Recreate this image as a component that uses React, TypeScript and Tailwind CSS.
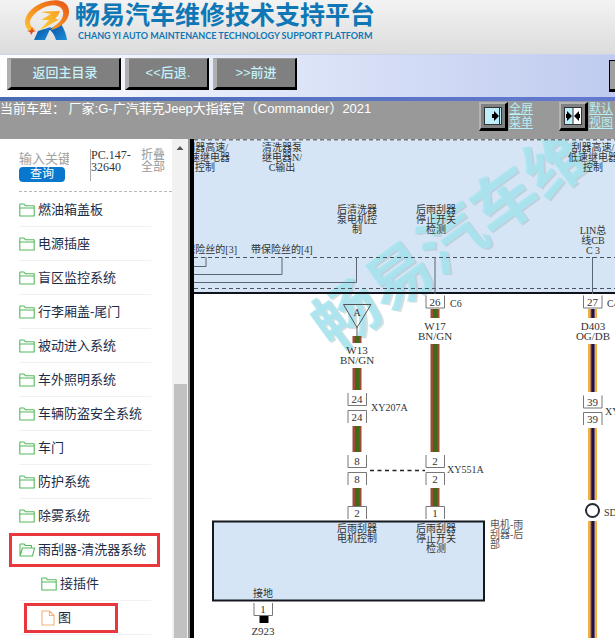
import type { ReactNode } from "react";

const folders = ["燃油箱盖板", "电源插座", "盲区监控系统", "行李厢盖-尾门", "被动进入系统", "车外照明系统", "车辆防盗安全系统", "车门", "防护系统", "除雾系统"];

function Logo() {
    return (<svg viewBox="0 0 48 42" className="h-[42px] w-12 shrink-0" aria-hidden="true">
      <defs>
        <linearGradient id="ring" x1="1" y1="0" x2="0" y2="1">
          <stop offset="0" stopColor="#e8521a" />
          <stop offset="0.5" stopColor="#f58a1c" />
          <stop offset="1" stopColor="#fdc63a" />
        </linearGradient>
        <linearGradient id="bolt" x1="1" y1="0" x2="0" y2="1">
          <stop offset="0" stopColor="#f9a01f" />
          <stop offset="1" stopColor="#fdd03c" />
        </linearGradient>
        <linearGradient id="leg" x1="0" y1="0" x2="1" y2="1">
          <stop offset="0" stopColor="#0b4fa5" />
          <stop offset="1" stopColor="#1b8fd8" />
        </linearGradient>
      </defs>
      <path d="M14 31 L27 27 L21 40 L10 40 Z" fill="url(#leg)" />
      <path d="M25 29 L37 24 Q42 32 43 40 L32 40 Q30 33 25 29 Z" fill="url(#leg)" />
      <path d="M9 32 C-3 29 -1 14 12 6 C23 -1 38 -2 43 5 C49 15 41 27 27 30 L30 26 C38 22 42 13 37 8 C32 3 22 5 14 11 C5 18 3 25 11 29 Z" fill="url(#ring)" />
      <path d="M17 12 Q29 11 36 11 Q35 15 31 19 Q36 19 34 20 L15 31 L25 20 L17 20 L27 14 Z" fill="url(#bolt)" />
      <path d="M8 27 L9 30 L12 31 L9 32 L7 35 L6 32 L3 31 L7 30 Z" fill="#e2501c" />
    </svg>);
}

function FolderIcon({ open = false }: { open?: boolean }) {
    return (<svg viewBox="0 0 16 14" className="h-3.5 w-4 shrink-0" fill="none" stroke="#55b95c" strokeWidth="1.1" strokeLinejoin="round" aria-hidden="true">
      {open ? <path d="M1 13V1.5Q1 1 1.5 1H5L6.5 2.5H12.5V5M1 13L3.5 5H15.5L13.5 13H1Z" /> : <path d="M.8 13V1.5Q.8 1 1.3 1H5L6.5 2.8H15.2V13H.8ZM.8 5H15.2" />}
    </svg>);
}

function PageIcon() {
    return (<svg viewBox="0 0 14 16" className="h-4 w-3.5 shrink-0" fill="none" stroke="#f0b27a" strokeWidth="1.1" strokeLinejoin="round" aria-hidden="true">
      <path d="M1 1H8.5L13 5.5V15H1ZM8.5 1V5.5H13" />
    </svg>);
}

function ToolButton({ children, className }: { children: ReactNode; className: string }) {
    return (<button type="button" className={"h-8 shrink-0 border-t border-r-2 border-b-3 border-l-4 border-t-[#999] border-r-black border-b-black border-l-[#b0b0b0] bg-[#808080] text-[13px] font-medium text-[#c4f1fa] " + className}>
      {children}
    </button>);
}

function ViewLink({ first, second, children }: { first: string; second: string; children: ReactNode }) {
    return (<div className="flex w-[54px] shrink-0">
      <button type="button" aria-label={first + second} className="flex h-[29px] w-[29px] shrink-0 items-center justify-center border-t-2 border-r-3 border-b-3 border-l-2 border-t-[#b4b4b4] border-r-black border-b-black border-l-[#b4b4b4] bg-[#808080]">
        <svg viewBox="0 0 18 18" className="h-[18px] w-[18px]" aria-hidden="true">{children}</svg>
      </button>
      <a href="#" className="ml-px text-xs leading-[14px] whitespace-nowrap text-[#b5eef5] underline">
        {first}<br />{second}
      </a>
    </div>);
}

function TreeRow({ label, icon, className = "", lined = true, frame }: { label: string; icon: ReactNode; className?: string; lined?: boolean; frame?: string }) {
    return (<li className={"relative mr-[21px] flex h-[34px] items-center border-b " + (lined ? "border-[#f1f1f3]" : "border-transparent")}>
      <a href="#" className={"flex items-center gap-[3px] text-[13px] leading-5 whitespace-nowrap text-[#1c2c48] " + className}>
        {icon}
        {label}
      </a>
      {frame && <span className={"pointer-events-none absolute border-3 border-[#e8383d] " + frame} />}
    </li>);
}

function Label({ x, y, lines, size = 10, anchor = "middle", color = "#333" }: { x: number; y: number; lines: string[]; size?: number; anchor?: "middle" | "start" | "end"; color?: string }) {
    return (<text textAnchor={anchor} fontSize={size} fill={color}>
      {lines.map((line, i) => <tspan key={i} x={x} y={y + i * 10}>{line}</tspan>)}
    </text>);
}

// connector pin: the side that faces the wire stays open
function Pin({ x, y, n, open }: { x: number; y: number; n: string; open: "top" | "bottom" }) {
    const d = open === "top" ? `M${x - 9} ${y}v12.5h18.5v-12.5` : `M${x - 9} ${y + 12.5}v-12.5h18.5v12.5`;
    return (<g>
      <path d={d} fill="none" stroke="#777" />
      <text x={x} y={y + 10} textAnchor="middle" fontSize={11} fill="#333">{n}</text>
    </g>);
}

function Wire({ x, from, to, orange = false }: { x: number; from: number; to: number; orange?: boolean }) {
    const h = to - from;
    return (<g>
      <rect x={x - 4.5} y={from} width={9} height={h} fill={orange ? "#f0b23c" : "#a04a38"} />
      <rect x={x - 2} y={from} width={4.5} height={h} fill={orange ? "#77577a" : "#3d6b16"} />
      {orange && <rect x={x - 1} y={from} width={2.5} height={h} fill="#1d1440" />}
    </g>);
}

function WiringDiagram() {
    return (<svg viewBox="194 139 421 499" className="block w-full" fontFamily='"Liberation Serif", "Noto Sans CJK SC", serif' role="img" aria-label="图">
      <rect x="194" y="139" width="421" height="154" fill="#d5e5f5" />
      <rect x="213" y="521.5" width="271" height="79" fill="#d5e5f5" stroke="#15191f" strokeWidth="2" />
      <g transform="translate(334 353) rotate(-36)" fontSize="65" fontWeight="700" fontFamily='"Noto Sans CJK SC", sans-serif'>
        <text x="1" y="2" fill="#9fb0b5" opacity="0.4">畅易汽车维</text>
        <text fill="#a6e6f0" opacity="0.85">畅易汽车维</text>
      </g>
      <path d="M194 139.5H615" stroke="#777" strokeWidth="2" strokeDasharray="4 3" />
      <path d="M194 257.5H615M194 288.5H615" stroke="#4a5460" strokeDasharray="4 3" />
      <path d="M194 293H615" stroke="#10141a" strokeWidth="2" />
      <path d="M194 266.5H206V257M194 274.5H282V257M194 282.5H356.5V257M435 257V294M592.5 257V294" fill="none" stroke="#5b6672" />

      <Label x={228} y={151} anchor="end" lines={["刮器高速/"]} />
      <Label x={230} y={161} anchor="end" lines={["低速继电器"]} />
      <Label x={215} y={171} anchor="end" lines={["控制"]} />
      <Label x={282} y={151} lines={["清洗器泵", "继电器N/", "C输出"]} />
      <Label x={357} y={213} lines={["后清洗器", "泵电机控", "制"]} />
      <Label x={436} y={213} lines={["后雨刮器", "停止开关", "检测"]} />
      <Label x={237} y={253} anchor="end" lines={["带保险丝的[3]"]} />
      <Label x={251} y={253} anchor="start" lines={["带保险丝的[4]"]} />
      <Label x={593} y={151} lines={["刮器高速/", "低速继电器", "控制"]} />
      <Label x={593} y={234} lines={["LIN总", "线CB", "C 3"]} />

      <path d="M343.5 304.5H371L357 327.5ZM357 327V337" fill="none" stroke="#555" />
      <Label x={357} y={316} lines={["A"]} />
      <Wire x={357} from={336} to={343} />
      <Label x={357} y={354} size={11} lines={["W13", "BN/GN"]} />
      <Wire x={357} from={368} to={390} />
      <Pin x={357} y={393} n="24" open="top" />
      <Pin x={357} y={410.5} n="24" open="bottom" />
      <Label x={371} y={411} anchor="start" lines={["XY207A"]} />
      <Wire x={357} from={426} to={452} />
      <Pin x={357} y={455} n="8" open="top" />
      <Pin x={357} y={472.5} n="8" open="bottom" />
      <Wire x={357} from={488} to={506} />
      <Pin x={357} y={506.5} n="2" open="bottom" />
      <path d="M370 470.5H425" stroke="#222" strokeWidth="1.5" strokeDasharray="4 3.5" />

      <Pin x={435} y={295.5} n="26" open="top" />
      <Label x={450} y={307} anchor="start" lines={["C6"]} />
      <Wire x={435} from={309} to={318} />
      <Label x={435} y={330} size={11} lines={["W17", "BN/GN"]} />
      <Wire x={435} from={344} to={452} />
      <Pin x={435} y={455} n="2" open="top" />
      <Pin x={435} y={472.5} n="2" open="bottom" />
      <Label x={447} y={473} anchor="start" lines={["XY551A"]} />
      <Wire x={435} from={488} to={506} />
      <Pin x={435} y={506.5} n="1" open="bottom" />

      <Pin x={592.5} y={295.5} n="27" open="top" />
      <Label x={607} y={307} anchor="start" lines={["C4"]} />
      <Wire x={592.5} from={309} to={318} orange />
      <Label x={593} y={330} size={11} lines={["D403", "OG/DB"]} />
      <Wire x={592.5} from={344} to={392} orange />
      <Pin x={592.5} y={395.5} n="39" open="top" />
      <Pin x={592.5} y={412.5} n="39" open="bottom" />
      <Label x={605} y={415} anchor="start" lines={["XY"]} />
      <Wire x={592.5} from={428} to={500} orange />
      <circle cx="592.5" cy="510.5" r="6.5" fill="#fff" stroke="#262a33" strokeWidth="2" />
      <Label x={604} y={516} anchor="start" lines={["SD"]} />
      <Wire x={592.5} from={521} to={638} orange />

      <Label x={357} y={532} lines={["后雨刮器", "电机控制"]} />
      <Label x={436} y={532} lines={["后雨刮器", "停止开关", "检测"]} />
      <Label x={490} y={528} anchor="start" color="#555" lines={["电机-雨", "刮器-后", "部"]} />
      <Label x={263} y={597} lines={["接地"]} />
      <Pin x={263} y={603} n="1" open="top" />
      <rect x="259.5" y="616" width="9" height="7" fill="#000" />
      <Label x={263} y={635} size={11} lines={["Z923"]} />
    </svg>);
}

export default function App() {
    return (<div className='flex h-screen flex-col overflow-hidden bg-white font-["Liberation_Sans","Noto_Sans_CJK_SC",sans-serif]'>
      <header className="flex h-[54px] shrink-0 bg-linear-to-b from-[#f3f3f3] to-[#dcdcdc] pl-6">
        <Logo />
        <div className="ml-[3px] whitespace-nowrap text-[#0f77b5]">
          <h1 className="text-[25px] leading-[30px] font-bold">畅易汽车维修技术支持平台</h1>
          <p className="ml-[3px] font-[Lato] text-[9px] leading-3 font-bold">CHANG YI AUTO MAINTENANCE TECHNOLOGY SUPPORT PLATFORM</p>
        </div>
      </header>

      <nav className="flex h-[43px] shrink-0 gap-1 overflow-hidden border-t border-[#c9d2ee] bg-linear-to-r from-white via-[#dde4f8] to-[#bfcbef] pt-[3px] pl-[7px]">
        <ToolButton className="w-[114px]">返回主目录</ToolButton>
        <ToolButton className="w-[84px]">&lt;&lt;后退.</ToolButton>
        <ToolButton className="w-[84px]">&gt;&gt;前进</ToolButton>
        <button type="button" aria-label="更多" className="mt-0.5 ml-auto h-8 w-1.5 shrink-0 border-t border-b-3 border-l border-black bg-[#a0a0a0]" />
      </nav>
      <div className="h-1 shrink-0 bg-linear-to-r from-[#4a6cb4] to-[#6479d0]" />

      <div className="flex h-[38px] shrink-0 justify-between bg-[#999] pt-px">
        <p className="text-[13px] leading-[14px] whitespace-nowrap text-white">当前车型：&nbsp;厂家:G-广汽菲克Jeep大指挥官（Commander）2021</p>
        <div className="flex gap-[26px] pr-0.5">
          <ViewLink first="全屏" second="菜单">
            <rect x="0.5" y="0.5" width="17" height="17" fill="#bdeefa" stroke="#333" />
            <path d="M15.5 1V17" stroke="#333" />
            <path d="M8 7H10V4L15 9L10 14V11H8Z" fill="#000" />
          </ViewLink>
          <ViewLink first="默认" second="视图">
            <rect x="0.5" y="0.5" width="17" height="17" fill="#bdeefa" stroke="#333" />
            <rect x="9" y="1" width="8" height="16" fill="#fff" />
            <path d="M9 1V17" stroke="#333" />
            <path d="M2 7H3V4L8 9L3 14V11H2ZM16 7H15V4L10 9L15 14V11H16Z" fill="#000" />
          </ViewLink>
        </div>
      </div>

      <div className="flex min-h-0 flex-1">
        <aside className="w-[172px] shrink-0 pl-[19px]">
          <form className="flex h-[53px] border-b border-dashed border-[#b8b8b8] pt-2.5">
            <div className="w-[71px] pt-0.5">
              <input aria-label="输入关键字" placeholder="输入关键字" className="block h-4 w-[50px] text-[13px] leading-4 outline-none placeholder:text-[#a0a0a0]" />
              <button type="button" className="block h-[15px] w-[46px] rounded-sm bg-[#0a77cf] text-xs leading-[15px] text-white">查询</button>
            </div>
            <p className='h-8 w-[51px] border-l border-[#aaa] font-["Liberation_Serif"] text-xs leading-3 text-[#333]'>PC.147-<br />32640</p>
            <button type="button" className="h-6 text-xs leading-3 whitespace-nowrap text-[#999]">折叠<br />全部</button>
          </form>
          <ul className="pt-px">
            {folders.map((name, i) => <TreeRow key={name} label={name} icon={<FolderIcon />} lined={i < folders.length - 1} />)}
            <TreeRow label="雨刮器-清洗器系统" icon={<FolderIcon open />} lined={false} frame="-left-2.5 top-0 h-[34px] w-[151px]" />
            <TreeRow label="接插件" icon={<FolderIcon />} className="pl-[22px]" />
            <TreeRow label="图" icon={<PageIcon />} className="pl-[22px]" frame="left-[5px] top-0.5 h-[30px] w-[94px]" />
          </ul>
        </aside>
        <div className="flex w-4 shrink-0 flex-col items-center bg-[#f1f1f1]">
          <svg viewBox="0 0 16 16" className="h-4 w-4" aria-hidden="true"><path d="M4.5 11L8 7L11.5 11Z" fill="#555" /></svg>
          <div className="mt-[229px] w-[13px] flex-1 bg-[#c1c1c1]" />
        </div>
        <div className="w-1.5 shrink-0 border-l-2 border-[#999] bg-black" />
        <main className="min-w-0 flex-1 overflow-hidden">
          <WiringDiagram />
        </main>
      </div>
    </div>);
}
